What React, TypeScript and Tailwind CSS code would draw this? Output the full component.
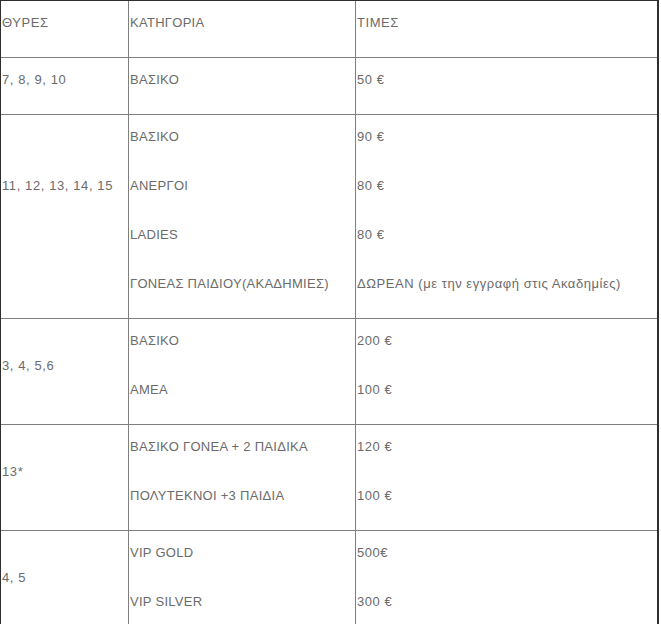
import React from "react";

type Group = { doors: string; extra?: boolean; rows: [string, string][] };

const groups: Group[] = [
  { doors: "ΘΥΡΕΣ", rows: [["ΚΑΤΗΓΟΡΙΑ", "ΤΙΜΕΣ"]] },
  { doors: "7, 8, 9, 10", rows: [["ΒΑΣΙΚΟ", "50 €"]] },
  {
    doors: "11, 12, 13, 14, 15",
    extra: true,
    rows: [
      ["ΒΑΣΙΚΟ", "90 €"],
      ["ΑΝΕΡΓΟΙ", "80 €"],
      ["LADIES", "80 €"],
      ["ΓΟΝΕΑΣ ΠΑΙΔΙΟΥ(ΑΚΑΔΗΜΙΕΣ)", "ΔΩΡΕΑΝ (με την εγγραφή στις Ακαδημίες)"],
    ],
  },
  {
    doors: "3, 4, 5,6",
    rows: [
      ["ΒΑΣΙΚΟ", "200 €"],
      ["ΑΜΕΑ", "100 €"],
    ],
  },
  {
    doors: "13*",
    rows: [
      ["ΒΑΣΙΚΟ ΓΟΝΕΑ + 2 ΠΑΙΔΙΚΑ", "120 €"],
      ["ΠΟΛΥΤΕΚΝΟΙ +3 ΠΑΙΔΙΑ", "100 €"],
    ],
  },
  {
    doors: "4, 5",
    rows: [
      ["VIP GOLD", "500€"],
      ["VIP SILVER", "300 €"],
    ],
  },
];

function Lines({ items }: { items: string[] }) {
  return (
    <div className="flex flex-col gap-[34px] pt-[14px] pb-[27px]">
      {items.map((t, i) => (
        <div key={i} className="h-[15px] leading-[15px] whitespace-nowrap">
          {t}
        </div>
      ))}
    </div>
  );
}

export default function App() {
  return (
    <div className="bg-white min-h-screen">
      <div className="w-[659px] border-l border-t border-r-2 border-[#2f2f2f] font-['Liberation_Sans',Arial,sans-serif] text-[13px] text-[#6b6b6b]">
        {groups.map((g, gi) => (
          <div key={gi} className="flex border-b border-[#7f7f7f]">
            <div className="w-[128px] shrink-0 border-r border-[#7f7f7f] flex flex-col justify-center pl-[1px] tracking-[0.6px]">
              <Lines items={g.extra ? [g.doors, ""] : [g.doors]} />
            </div>
            <div className="w-[227px] shrink-0 border-r border-[#7f7f7f] pl-[1px] tracking-[0.28px]">
              <Lines items={g.rows.map((r) => r[0])} />
            </div>
            <div className="flex-1 pl-[1px] tracking-[0.55px]">
              <Lines items={g.rows.map((r) => r[1])} />
            </div>
          </div>
        ))}
      </div>
    </div>
  );
}
